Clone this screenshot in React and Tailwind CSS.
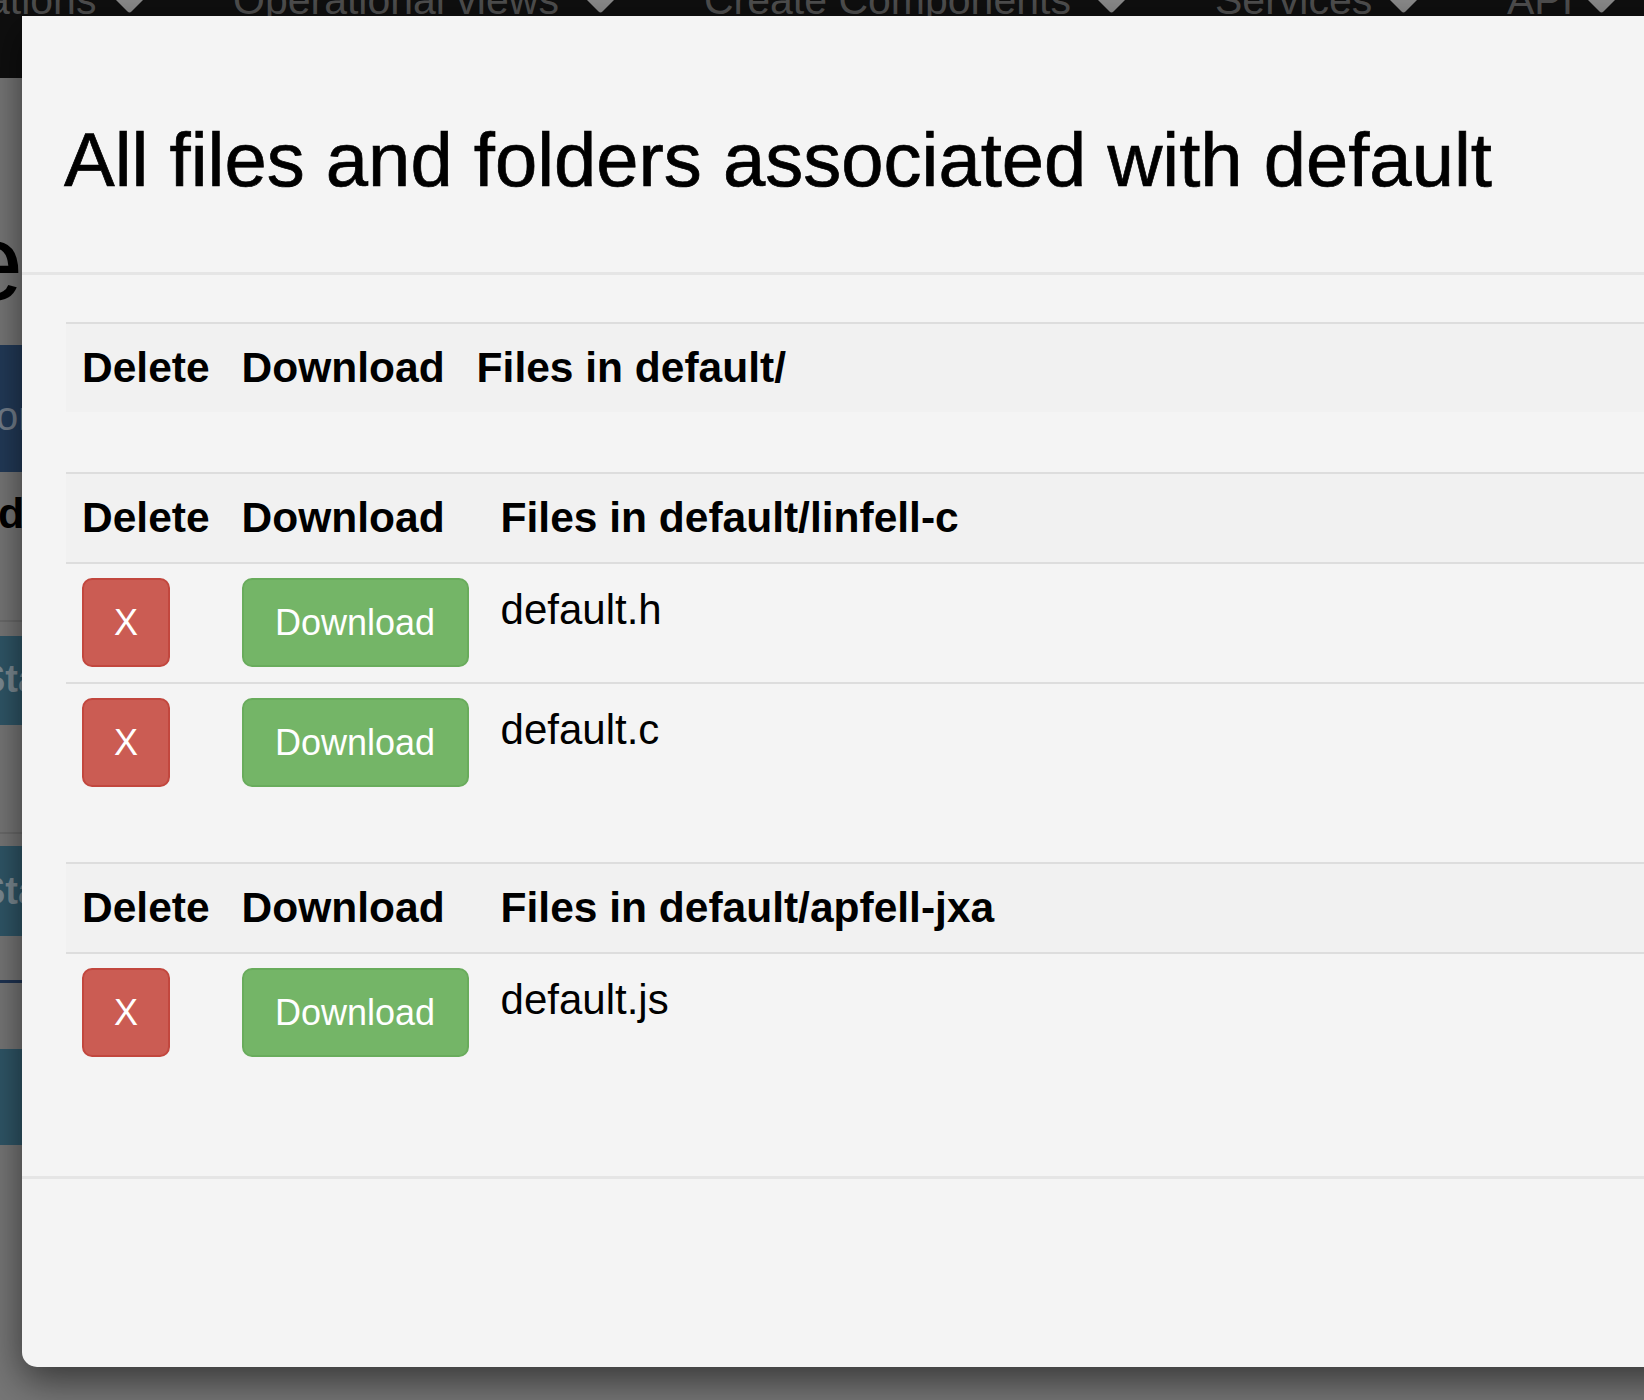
const navItems = [
  { label: "ations", w: "w-[113px]" },
  { label: "Operational views", w: "w-[338px]" },
  { label: "Create Components", w: "w-[378px]" },
  { label: "Services", w: "w-[159px]" },
  { label: "API", w: "w-[65px]" },
];

const folders = [
  { dir: "default/", files: [] },
  { dir: "default/linfell-c", files: ["default.h", "default.c"] },
  { dir: "default/apfell-jxa", files: ["default.js"] },
];

function Caret() {
  return (
    <svg width="27" height="13" viewBox="0 0 27 13" className="shrink-0">
      <path d="M0 0 H27 L15.5 11.5 Q13.5 13.5 11.5 11.5 Z" fill="#8a8a8a" />
    </svg>
  );
}

// the page that sits under the dark backdrop, only a sliver of it shows
function Backdrop() {
  return (
    <div className="flex flex-col">
      <div className="h-[78px] bg-[#0f0f0f] flex items-start gap-[90px] overflow-hidden -ml-[13px]">
        {navItems.map((item) => (
          <div key={item.label} className="flex items-start gap-[16px] shrink-0">
            <span className={"-mt-[20px] text-[41px] leading-[41px] text-[#4e4e4e] whitespace-nowrap " + item.w}>
              {item.label}
            </span>
            <Caret />
          </div>
        ))}
      </div>

      <div className="h-[129px] bg-[#767676]" />
      <div className="h-[110px] bg-[#767676] overflow-hidden">
        <span className="block -ml-[38px] text-[110px] leading-[110px] text-black">e</span>
      </div>
      <div className="h-[28px] bg-[#767676]" />

      <div className="h-[127px] bg-[#223a58] overflow-hidden">
        <span className="block mt-[51px] -ml-[4px] text-[40px] leading-[40px] text-[#727d8a]">or</span>
      </div>

      <div className="h-[148px] bg-[#767676] overflow-hidden">
        <span className="block mt-[20px] -ml-[2px] text-[43px] leading-[43px] font-bold text-black">de</span>
      </div>
      <div className="h-[2px] bg-[#6a6a6a]" />
      <div className="h-[14px] bg-[#767676]" />

      <div className="h-[89px] bg-[#2f5667] overflow-hidden">
        <span className="block mt-[24px] -ml-[20px] text-[38px] leading-[38px] font-bold text-[#7b8a92]">Sta</span>
      </div>
      <div className="h-[107px] bg-[#767676]" />
      <div className="h-[2px] bg-[#6a6a6a]" />
      <div className="h-[12px] bg-[#767676]" />

      <div className="h-[90px] bg-[#2f5667] overflow-hidden">
        <span className="block mt-[26px] -ml-[20px] text-[38px] leading-[38px] font-bold text-[#7b8a92]">Sta</span>
      </div>
      <div className="h-[44px] bg-[#767676]" />
      <div className="h-[3px] bg-[#1e3352]" />
      <div className="h-[66px] bg-[#767676]" />
      <div className="h-[96px] bg-[#2f5667]" />
    </div>
  );
}

function FolderTable({ dir, files }) {
  return (
    <table className="w-full mb-[60px] border-separate border-spacing-0 text-black">
      <thead>
        <tr className="bg-[#f1f1f1]">
          <th className="w-px whitespace-nowrap border-t-2 border-[#dddddd] px-4 py-[14px] text-left text-[42.5px] leading-[60px] font-bold">
            Delete
          </th>
          <th className="w-px whitespace-nowrap border-t-2 border-[#dddddd] px-4 py-[14px] text-left text-[42.5px] leading-[60px] font-bold">
            Download
          </th>
          <th className="whitespace-nowrap border-t-2 border-[#dddddd] px-4 py-[14px] text-left text-[42.5px] leading-[60px] font-bold">
            Files in {dir}
          </th>
        </tr>
      </thead>
      <tbody>
        {files.map((f) => (
          <tr key={f}>
            <td className="align-top border-t-2 border-[#dddddd] px-4 pt-[14px] pb-[15px]">
              <button className="w-[88px] h-[89px] rounded-[10px] border-2 border-[#c2473e] bg-[#cb5c53] text-white text-[36px] leading-none flex items-center justify-center">
                X
              </button>
            </td>
            <td className="align-top border-t-2 border-[#dddddd] px-4 pt-[14px] pb-[15px]">
              <button className="w-[227px] h-[89px] rounded-[10px] border-2 border-[#69ac5c] bg-[#74b567] text-white text-[36px] leading-none flex items-center justify-center">
                Download
              </button>
            </td>
            <td className="align-top border-t-2 border-[#dddddd] px-4 pt-[16px] pb-[15px] text-[42px] leading-[60px]">
              {f}
            </td>
          </tr>
        ))}
      </tbody>
    </table>
  );
}

export default function App() {
  return (
    <div className="relative w-full h-[1400px] overflow-hidden bg-[#767676] font-['Liberation_Sans',Arial,sans-serif]">
      <Backdrop />

      {/* modal */}
      <div className="absolute left-[22px] top-[16px] w-[1700px] bg-[#f4f4f4] rounded-bl-[15px] shadow-[0_13px_38px_rgba(0,0,0,0.55)]">
        <div className="pl-[42px] pr-[40px] pt-[103px] pb-[71px] border-b-[3px] border-[#e5e5e5]">
          <h4 className="text-[76px] leading-[82px] font-normal text-black whitespace-nowrap [-webkit-text-stroke:0.7px_#000]">
            All files and folders associated with default
          </h4>
        </div>

        <div className="px-[44px] pt-[47px] pb-[44px]">
          {folders.map((folder) => (
            <FolderTable key={folder.dir} dir={folder.dir} files={folder.files} />
          ))}
        </div>

        <div className="h-[191px] border-t-[3px] border-[#e5e5e5]" />
      </div>
    </div>
  );
}
